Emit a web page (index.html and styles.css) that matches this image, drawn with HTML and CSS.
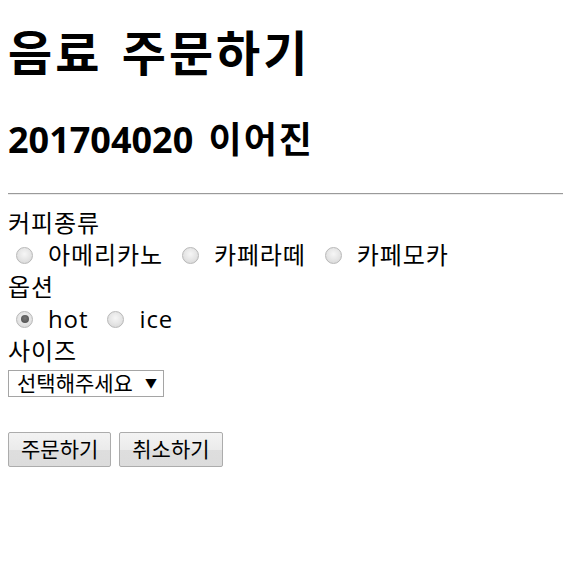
FILE: index.html
```html
<!DOCTYPE html>
<html lang="ko">
<head>
<meta charset="utf-8">
<title>음료 주문하기</title>
<link rel="stylesheet" href="styles.css">
</head>
<body>
<h1 class="title">음료 주문하기</h1>
<h2 class="subtitle">201704020 <span class="name">이어진</span></h2>
<hr class="divider">
<form class="order">
  <div class="line">커피종류</div>
  <div class="line choices">
    <label class="choice"><input type="radio" name="coffee" class="radio">아메리카노</label>
    <label class="choice"><input type="radio" name="coffee" class="radio">카페라떼</label>
    <label class="choice"><input type="radio" name="coffee" class="radio">카페모카</label>
  </div>
  <div class="line">옵션</div>
  <div class="line choices">
    <label class="choice"><input type="radio" name="opt" class="radio" checked>hot</label>
    <label class="choice"><input type="radio" name="opt" class="radio">ice</label>
  </div>
  <div class="line">사이즈</div>
  <div class="select-wrap">
    <select class="size">
      <option>선택해주세요</option>
      <option>Small</option>
      <option>Medium</option>
      <option>Large</option>
    </select>
  </div>
  <div class="actions">
    <button type="button" class="btn">주문하기</button>
    <button type="reset" class="btn">취소하기</button>
  </div>
</form>
</body>
</html>
```
FILE: styles.css
```css
html, body {
  background: #ffffff;
}
body {
  margin: 0;
  padding: 8px;
  color: #000;
  font-family: "Open Sans", "Noto Sans CJK KR", sans-serif;
  font-size: 24px;
  line-height: 32px;
}
.title {
  margin: 17px 0 0;
  font-size: 48px;
  line-height: 56px;
  font-weight: 700;
  letter-spacing: 3px;
  word-spacing: 4px;
}
.subtitle {
  margin: 37px 0 0;
  font-size: 36px;
  line-height: 44px;
  font-weight: 700;
  word-spacing: 6px;
}
.name {
  letter-spacing: 2px;
}
.divider {
  margin: 31px -8px 0 0;
  height: 0;
  border: 0;
  border-top: 1px solid #9a9a9a;
  border-bottom: 1px solid #ececec;
}
.order {
  margin: 12px 0 0;
  display: flex;
  flex-direction: column;
  align-items: flex-start;
}
.line {
  height: 32px;
  line-height: 32px;
  white-space: nowrap;
  letter-spacing: 0.9px;
}
.choices {
  display: flex;
  align-items: center;
  gap: 11px;
}
.choice {
  display: flex;
  align-items: center;
}
.radio {
  appearance: none;
  -webkit-appearance: none;
  width: 17px;
  height: 17px;
  margin: 0 15px 0 8px;
  border-radius: 50%;
  border: 1px solid #b8b8b8;
  background: radial-gradient(circle at 50% 40%, #f6f6f6 0%, #e4e4e4 55%, #d2d2d2 100%);
  box-sizing: border-box;
  position: relative;
  flex: none;
}
.radio:checked::after {
  content: "";
  position: absolute;
  left: 3.5px;
  top: 3.5px;
  width: 8px;
  height: 8px;
  border-radius: 50%;
  background: radial-gradient(circle at 50% 40%, #777 0%, #4a4a4a 100%);
}
.select-wrap {
  position: relative;
  margin-top: 3px;
  line-height: 0;
}
.size {
  display: block;
  appearance: none;
  -webkit-appearance: none;
  width: 156px;
  height: 27px;
  margin: 0;
  padding: 0 20px 0 8px;
  border: 1px solid #a5a5a5;
  border-radius: 0;
  background: #fff;
  color: #000;
  font-family: "Open Sans", "Noto Sans CJK KR", sans-serif;
  font-size: 21px;
  line-height: 25px;
}
.select-wrap::after {
  content: "▼";
  position: absolute;
  right: 7px;
  top: 7px;
  font-size: 12px;
  line-height: 14px;
  color: #000;
  pointer-events: none;
}
.actions {
  margin-top: 35px;
  display: flex;
  gap: 8px;
}
.btn {
  height: 35px;
  margin: 0;
  padding: 0 12px;
  border: 1px solid #acacac;
  border-radius: 2px;
  background: linear-gradient(#f3f3f3 0%, #ebebeb 50%, #dedede 51%, #dcdcdc 100%);
  color: #000;
  font-family: "Open Sans", "Noto Sans CJK KR", sans-serif;
  font-size: 21px;
  line-height: 33px;
}
```
